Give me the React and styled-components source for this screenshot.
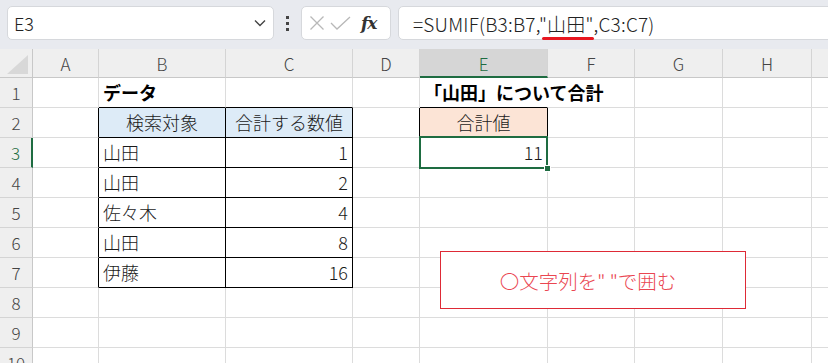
import React from "react";
import styled, { createGlobalStyle } from "styled-components";

const GlobalStyle = createGlobalStyle`
  html, body { margin: 0; padding: 0; background: #ffffff; }
  body { font-family: "Noto Sans CJK JP", "Noto Sans", sans-serif; }
  * { box-sizing: border-box; }
`;

const FONT = `"Noto Sans CJK JP", "Noto Sans", sans-serif`;

const Page = styled.div`
  width: 828px;
  height: 363px;
  overflow: hidden;
  background: #ffffff;
`;

const FormulaBar = styled.div`
  height: 49px;
  background: #e8eaef;
  display: flex;
  align-items: stretch;
  padding: 6px 0 9px 7px;
`;

const NameBox = styled.div`
  width: 267px;
  background: #ffffff;
  border: 1px solid #d6d8dc;
  border-radius: 5px;
  display: flex;
  align-items: center;
  justify-content: space-between;
  padding: 0 7px 0 6px;
  font-family: ${FONT};
  font-size: 18px;
  font-weight: 300;
  color: #222;
`;

const Dots = styled.div`
  width: 27px;
  display: flex;
  flex-direction: column;
  align-items: center;
  justify-content: center;
  gap: 3px;
`;

const Dot = styled.span`
  width: 3px;
  height: 3px;
  background: #444;
`;

const FxBox = styled.div`
  width: 90px;
  background: #ffffff;
  border: 1px solid #d6d8dc;
  border-radius: 5px;
  display: flex;
  align-items: center;
  padding: 0 0 0 7px;
  gap: 5px;
`;

const Fx = styled.span`
  font-family: "DejaVu Serif", "Liberation Serif", serif;
  font-style: italic;
  font-weight: bold;
  font-size: 17px;
  color: #333;
  margin-left: 4px;
  letter-spacing: -1px;
`;

const FormulaInput = styled.div`
  flex: 1;
  margin-left: 7px;
  margin-right: -10px;
  background: #ffffff;
  border: 1px solid #d6d8dc;
  border-radius: 5px;
  display: flex;
  align-items: center;
  padding-left: 14px;
  font-family: ${FONT};
  font-size: 19px;
  letter-spacing: 0.2px;
  font-weight: 300;
  color: #222;
`;

const Underlined = styled.span`
  position: relative;
  &::after {
    content: "";
    position: absolute;
    left: 3px;
    right: 0px;
    bottom: -3px;
    height: 3px;
    border-radius: 2px;
    background: #e8161f;
  }
`;

const Sheet = styled.div`
  position: relative;
  display: grid;
  width: 900px;
  grid-template-columns: 33px 66px 127px 127px 67px 128px 87px 88px 89px 88px;
  grid-template-rows: 29px repeat(10, 30px);
  font-family: ${FONT};
  background: #ffffff;
`;

const ColHeader = styled.div`
  background: ${(p) => (p.$active ? "#d6d6d6" : "#efefef")};
  color: ${(p) => (p.$active ? "#1e6c41" : "#444")};
  border-right: 1px solid #d4d4d4;
  border-bottom: ${(p) => (p.$active ? "2px solid #1e6c41" : "1px solid #c8c8c8")};
  display: flex;
  align-items: center;
  justify-content: center;
  font-size: 17px;
  font-weight: 300;
  padding-top: ${(p) => (p.$active ? "1px" : "0")};
`;

const Corner = styled.div`
  position: relative;
  background: #efefef;
  border-right: 1px solid #c8c8c8;
  border-bottom: 1px solid #c8c8c8;
  &::after {
    content: "";
    position: absolute;
    right: 4px;
    bottom: 3px;
    width: 21px;
    height: 19px;
    background: #d8d8d8;
    clip-path: polygon(100% 0, 100% 100%, 0 100%);
  }
`;

const RowHeader = styled.div`
  background: #efefef;
  color: ${(p) => (p.$active ? "#1e6c41" : "#444")};
  border-right: ${(p) => (p.$active ? "2px solid #1e6c41" : "1px solid #c8c8c8")};
  border-bottom: 1px solid #d4d4d4;
  display: flex;
  align-items: center;
  justify-content: center;
  font-size: 17px;
  font-weight: 300;
`;

const Cell = styled.div`
  position: relative;
  z-index: ${(p) => (p.$overflow ? 1 : "auto")};
  background: ${(p) => p.$bg || "transparent"};
  border-right: 1px solid ${(p) => p.$rb || "#dcdcdc"};
  border-bottom: 1px solid ${(p) => p.$bb || "#dcdcdc"};
  display: flex;
  align-items: center;
  justify-content: ${(p) =>
    p.$align === "right" ? "flex-end" : p.$align === "center" ? "center" : "flex-start"};
  padding: 0 4px 1px 4px;
  font-size: 18px;
  font-weight: ${(p) => (p.$bold ? 700 : 300)};
  color: ${(p) => (p.$bold ? "#000" : "#1a1a1a")};
  white-space: nowrap;
  overflow: visible;
`;

const Selection = styled.div`
  position: absolute;
  top: -2px;
  left: -1px;
  right: -1px;
  bottom: -2px;
  border: 2px solid #1e6c41;
  pointer-events: none;
  z-index: 2;
`;

const Handle = styled.span`
  position: absolute;
  right: -5px;
  bottom: -5px;
  width: 7px;
  height: 7px;
  background: #1e6c41;
  border: 1px solid #ffffff;
`;

const Note = styled.div`
  position: absolute;
  left: 440px;
  top: 202px;
  width: 306px;
  height: 58px;
  border: 1px solid #de2a36;
  background: #ffffff;
  display: flex;
  align-items: center;
  justify-content: center;
  padding-right: 10px;
  font-family: ${FONT};
  font-size: 19.5px;
  font-weight: 300;
  color: #ea4651;
  z-index: 3;
`;

const Chevron = () => (
  <svg width="12" height="8" viewBox="0 0 12 8">
    <path d="M1 1.5 L6 6.5 L11 1.5" fill="none" stroke="#444" strokeWidth="1.4" />
  </svg>
);

const XIcon = () => (
  <svg width="16" height="16" viewBox="0 0 16 16">
    <path d="M1.5 1.5 L14.5 14.5 M14.5 1.5 L1.5 14.5" stroke="#b8b8b8" strokeWidth="1.3" />
  </svg>
);

const CheckIcon = () => (
  <svg width="22" height="14" viewBox="0 0 22 14">
    <path d="M1 7 L7 13 L20 1" fill="none" stroke="#b8b8b8" strokeWidth="1.3" />
  </svg>
);

const columns = ["A", "B", "C", "D", "E", "F", "G", "H", "I"];
const visibleLabels = ["A", "B", "C", "D", "E", "F", "G", "H"];
const BLACK = "#000000";

const data = {
  1: {
    B: { text: "データ", bold: true },
    E: { text: "「山田」について合計", bold: true, overflow: true },
  },
  2: {
    B: { text: "検索対象", align: "center", bg: "#ddebf7" },
    C: { text: "合計する数値", align: "center", bg: "#ddebf7" },
    E: { text: "合計値", align: "center", bg: "#fce4d6" },
  },
  3: { B: { text: "山田" }, C: { text: "1", align: "right" }, E: { text: "11", align: "right" } },
  4: { B: { text: "山田" }, C: { text: "2", align: "right" } },
  5: { B: { text: "佐々木" }, C: { text: "4", align: "right" } },
  6: { B: { text: "山田" }, C: { text: "8", align: "right" } },
  7: { B: { text: "伊藤" }, C: { text: "16", align: "right" } },
};

function borders(row, col) {
  let rb;
  let bb;
  const inTable = row >= 2 && row <= 7 && (col === "B" || col === "C");
  if (inTable) {
    rb = BLACK;
    bb = BLACK;
  }
  if (row >= 2 && row <= 7 && col === "A") rb = BLACK;
  if (row === 1 && (col === "B" || col === "C")) bb = BLACK;
  if (row === 2 && col === "E") {
    rb = BLACK;
    bb = BLACK;
  }
  if (row === 2 && col === "D") rb = BLACK;
  if (row === 1 && col === "E") {
    bb = BLACK;
    rb = "#ffffff";
  }
  return { rb, bb };
}

export default function App() {
  const rows = Array.from({ length: 10 }, (_, i) => i + 1);
  return (
    <Page>
      <GlobalStyle />
      <FormulaBar>
        <NameBox>
          <span>E3</span>
          <Chevron />
        </NameBox>
        <Dots>
          <Dot />
          <Dot />
          <Dot />
        </Dots>
        <FxBox>
          <XIcon />
          <CheckIcon />
          <Fx>fx</Fx>
        </FxBox>
        <FormulaInput>
          <span>
            =SUMIF(B3:B7,<Underlined>"山田"</Underlined>,C3:C7)
          </span>
        </FormulaInput>
      </FormulaBar>
      <Sheet>
        <Corner />
        {columns.map((c) => (
          <ColHeader key={c} $active={c === "E"}>
            {visibleLabels.includes(c) ? c : ""}
          </ColHeader>
        ))}
        {rows.map((r) => (
          <React.Fragment key={r}>
            <RowHeader $active={r === 3}>{r}</RowHeader>
            {columns.map((c) => {
              const d = (data[r] && data[r][c]) || {};
              const { rb, bb } = borders(r, c);
              return (
                <Cell
                  key={c}
                  $rb={rb}
                  $bb={bb}
                  $bg={d.bg}
                  $align={d.align}
                  $bold={d.bold}
                  $overflow={d.overflow}
                >
                  {d.text}
                  {r === 3 && c === "E" && (
                    <Selection>
                      <Handle />
                    </Selection>
                  )}
                </Cell>
              );
            })}
          </React.Fragment>
        ))}
        <Note>〇文字列を" "で囲む</Note>
      </Sheet>
    </Page>
  );
}
